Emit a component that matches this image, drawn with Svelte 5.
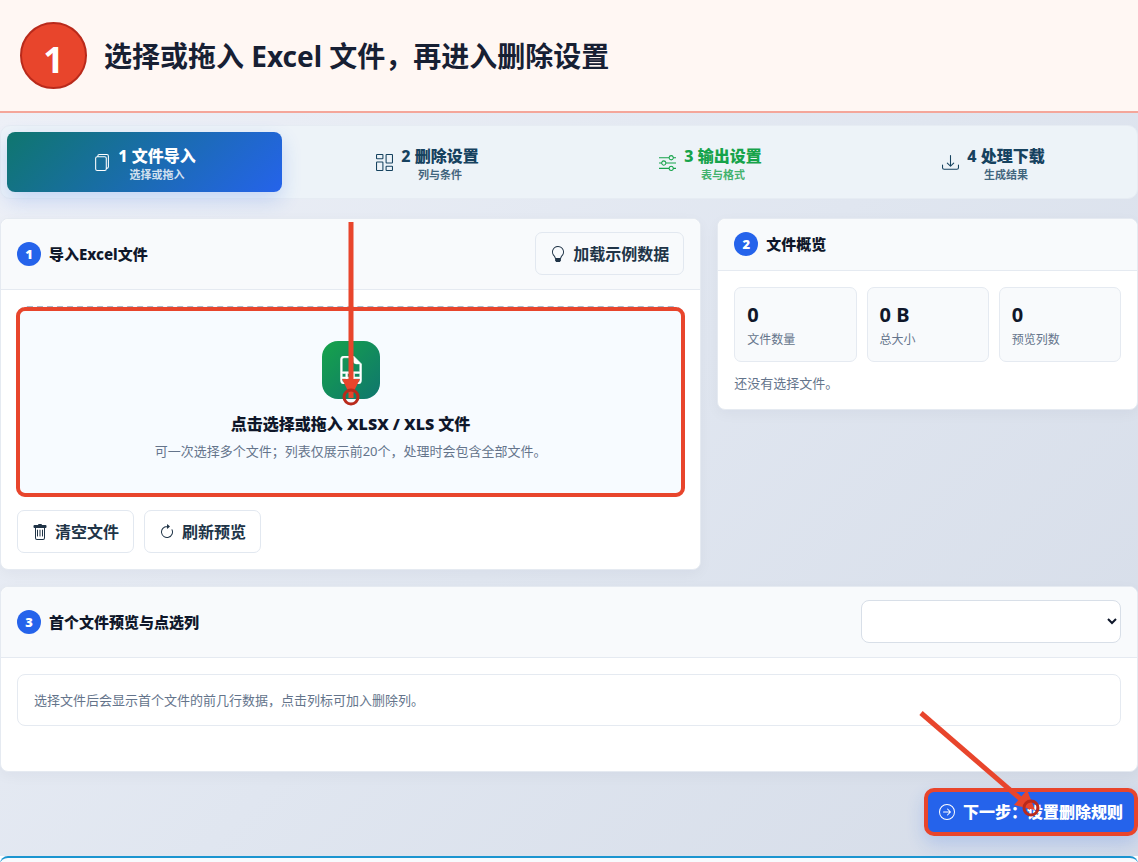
<script lang="ts">
	const icons = {
		files: 'M13 0H6a2 2 0 0 0-2 2 2 2 0 0 0-2 2v10a2 2 0 0 0 2 2h7a2 2 0 0 0 2-2 2 2 0 0 0 2-2V2a2 2 0 0 0-2-2m0 13V4a2 2 0 0 0-2-2H5a1 1 0 0 1 1-1h7a1 1 0 0 1 1 1v10a1 1 0 0 1-1 1M3 4a1 1 0 0 1 1-1h7a1 1 0 0 1 1 1v10a1 1 0 0 1-1 1H4a1 1 0 0 1-1-1z',
		columns:
			'M6 1v3H1V1zM1 0a1 1 0 0 0-1 1v3a1 1 0 0 0 1 1h5a1 1 0 0 0 1-1V1a1 1 0 0 0-1-1zm14 12v3h-5v-3zm-5-1a1 1 0 0 0-1 1v3a1 1 0 0 0 1 1h5a1 1 0 0 0 1-1v-3a1 1 0 0 0-1-1zM6 8v7H1V8zM1 7a1 1 0 0 0-1 1v7a1 1 0 0 0 1 1h5a1 1 0 0 0 1-1V8a1 1 0 0 0-1-1zm14-6v7h-5V1zm-5-1a1 1 0 0 0-1 1v7a1 1 0 0 0 1 1h5a1 1 0 0 0 1-1V1a1 1 0 0 0-1-1z',
		sliders:
			'M11.5 2a1.5 1.5 0 1 0 0 3 1.5 1.5 0 0 0 0-3M9.05 3a2.5 2.5 0 0 1 4.9 0H16v1h-2.05a2.5 2.5 0 0 1-4.9 0H0V3zM4.5 7a1.5 1.5 0 1 0 0 3 1.5 1.5 0 0 0 0-3M2.05 8a2.5 2.5 0 0 1 4.9 0H16v1H6.95a2.5 2.5 0 0 1-4.9 0H0V8zm9.45 4a1.5 1.5 0 1 0 0 3 1.5 1.5 0 0 0 0-3m-2.45 1a2.5 2.5 0 0 1 4.9 0H16v1h-2.05a2.5 2.5 0 0 1-4.9 0H0v-1z',
		download:
			'M.5 9.9a.5.5 0 0 1 .5.5v2.5a1 1 0 0 0 1 1h12a1 1 0 0 0 1-1v-2.5a.5.5 0 0 1 1 0v2.5a2 2 0 0 1-2 2H2a2 2 0 0 1-2-2v-2.5a.5.5 0 0 1 .5-.5M7.646 11.854a.5.5 0 0 0 .708 0l3-3a.5.5 0 0 0-.708-.708L8.5 10.293V1.5a.5.5 0 0 0-1 0v8.793L5.354 8.146a.5.5 0 1 0-.708.708z',
		bulb: 'M2 6a6 6 0 1 1 10.174 4.31c-.203.196-.359.4-.453.619l-.762 1.769A.5.5 0 0 1 10.5 13a.5.5 0 0 1 0 1 .5.5 0 0 1 0 1l-.224.447a1 1 0 0 1-.894.553H6.618a1 1 0 0 1-.894-.553L5.5 15a.5.5 0 0 1 0-1 .5.5 0 0 1 0-1 .5.5 0 0 1-.46-.302l-.761-1.77a2 2 0 0 0-.453-.618A5.98 5.98 0 0 1 2 6m6-5a5 5 0 0 0-3.479 8.592c.263.254.514.564.676.941L5.83 12h4.342l.632-1.467c.162-.377.413-.687.676-.941A5 5 0 0 0 8 1',
		trash: 'M5.5 5.5A.5.5 0 0 1 6 6v6a.5.5 0 0 1-1 0V6a.5.5 0 0 1 .5-.5m2.5 0a.5.5 0 0 1 .5.5v6a.5.5 0 0 1-1 0V6a.5.5 0 0 1 .5-.5m3 .5a.5.5 0 0 0-1 0v6a.5.5 0 0 0 1 0zM14.5 3a1 1 0 0 1-1 1H13v10a2 2 0 0 1-2 2H5a2 2 0 0 1-2-2V4h-.5a1 1 0 0 1-1-1V2a1 1 0 0 1 1-1H6a1 1 0 0 1 1-1h2a1 1 0 0 1 1 1h3.5a1 1 0 0 1 1 1zM4 4.059V14a1 1 0 0 0 1 1h6a1 1 0 0 0 1-1V4.059z',
		refresh:
			'M8 3a5 5 0 1 0 4.546 2.914.5.5 0 0 1 .908-.417A6 6 0 1 1 8 2zM8 4.466V.534a.25.25 0 0 1 .41-.192l2.36 1.966c.12.1.12.284 0 .384L8.41 4.658A.25.25 0 0 1 8 4.466',
		next: 'M1 8a7 7 0 1 0 14 0A7 7 0 0 0 1 8m15 0A8 8 0 1 1 0 8a8 8 0 0 1 16 0M4.5 7.5a.5.5 0 0 0 0 1h5.793l-2.147 2.146a.5.5 0 0 0 .708.708l3-3a.5.5 0 0 0 0-.708l-3-3a.5.5 0 1 0-.708.708L10.293 7.5z',
		sheet: 'M14 14V4.5L9.5 0H4a2 2 0 0 0-2 2v12a2 2 0 0 0 2 2h8a2 2 0 0 0 2-2M9.5 3A1.5 1.5 0 0 0 11 4.5h2V9H3V2a1 1 0 0 1 1-1h5.5zM3 12v-2h2v2zm0 1h2v2H4a1 1 0 0 1-1-1zm3 2v-2h3v2zm4 0v-2h3v1a1 1 0 0 1-1 1zm3-3h-3v-2h3zm-7 0v-2h3v2z',
	}

	type IconName = keyof typeof icons

	const steps: { title: string; hint: string; icon: IconName; state: string }[] = [
		{ title: '1 文件导入', hint: '选择或拖入', icon: 'files', state: 'active' },
		{ title: '2 删除设置', hint: '列与条件', icon: 'columns', state: '' },
		{ title: '3 输出设置', hint: '表与格式', icon: 'sliders', state: 'ready' },
		{ title: '4 处理下载', hint: '生成结果', icon: 'download', state: '' },
	]

	const stats = [
		{ value: '0', label: '文件数量' },
		{ value: '0 B', label: '总大小' },
		{ value: '0', label: '预览列数' },
	]
</script>

{#snippet icon(name: IconName)}
	<svg class="icon" viewBox="0 0 16 16" fill="currentColor" aria-hidden="true">
		<path d={icons[name]} />
	</svg>
{/snippet}

<header class="banner">
	<span class="banner-number">1</span>
	<h1>选择或拖入 Excel 文件，再进入删除设置</h1>
</header>

<main>
	<nav class="steps">
		{#each steps as step}
			<button type="button" class="step {step.state}">
				{@render icon(step.icon)}
				<span class="step-text">
					<strong>{step.title}</strong>
					<small>{step.hint}</small>
				</span>
			</button>
		{/each}
	</nav>

	<div class="columns">
		<section class="panel">
			<div class="panel-head">
				<span class="badge">1</span>
				<h2>导入Excel文件</h2>
				<button type="button" class="btn">{@render icon('bulb')}加载示例数据</button>
			</div>
			<div class="panel-body">
				<button type="button" class="dropzone">
					<span class="drop-icon">{@render icon('sheet')}</span>
					<strong>点击选择或拖入 XLSX / XLS 文件</strong>
					<span class="drop-hint">可一次选择多个文件；列表仅展示前20个，处理时会包含全部文件。</span>
					<span class="highlight"></span>
					<svg class="arrow arrow-down" viewBox="0 0 20 184" aria-hidden="true">
						<path d="M10 0v176" stroke="#e8452c" stroke-width="5" />
						<path d="M1 157h18l-9 18z" fill="#e8452c" />
						<circle cx="10" cy="175" r="7" fill="none" stroke="#b92a1b" stroke-width="3" />
					</svg>
				</button>
				<div class="actions">
					<button type="button" class="btn">{@render icon('trash')}清空文件</button>
					<button type="button" class="btn">{@render icon('refresh')}刷新预览</button>
				</div>
			</div>
		</section>

		<section class="panel">
			<div class="panel-head">
				<span class="badge">2</span>
				<h2>文件概览</h2>
			</div>
			<div class="panel-body">
				<div class="stats">
					{#each stats as stat}
						<div class="stat">
							<strong>{stat.value}</strong>
							<span>{stat.label}</span>
						</div>
					{/each}
				</div>
				<p class="empty">还没有选择文件。</p>
			</div>
		</section>
	</div>

	<section class="panel">
		<div class="panel-head">
			<span class="badge">3</span>
			<h2 id="preview-title">首个文件预览与点选列</h2>
			<select aria-labelledby="preview-title"></select>
		</div>
		<div class="panel-body preview">
			<p class="message">选择文件后会显示首个文件的前几行数据，点击列标可加入删除列。</p>
		</div>
	</section>

	<div class="footer">
		<button type="button" class="next">
			{@render icon('next')}下一步：设置删除规则
			<svg class="arrow arrow-next" viewBox="0 0 122 108" aria-hidden="true">
				<path d="M2 3l110 95" stroke="#e8452c" stroke-width="5" />
				<path d="M95 95l13-15 8 20z" fill="#e8452c" />
				<circle cx="112" cy="98" r="7" fill="none" stroke="#b92a1b" stroke-width="3" />
			</svg>
		</button>
	</div>
</main>

<div class="next-card"></div>

<style>
	:global(body) {
		margin: 0;
		background: #fff;
		color: #0f172a;
		font-family: 'Noto Sans', 'Noto Sans CJK SC', sans-serif;
		font-size: 13px;
		line-height: 20px;
	}

	h1,
	h2,
	p {
		margin: 0;
	}

	button,
	select {
		box-sizing: border-box;
		font: inherit;
		color: inherit;
	}

	button {
		cursor: pointer;
	}

	.icon {
		width: 16px;
		height: 16px;
		flex: none;
	}

	.banner {
		display: flex;
		align-items: center;
		gap: 17px;
		height: 111px;
		padding: 0 20px;
		background: #fff7f3;
		border-bottom: 2px solid #f4a69a;
	}

	.banner-number {
		box-sizing: border-box;
		width: 67px;
		height: 67px;
		padding-top: 6px;
		border: 2px solid #b92a1b;
		border-radius: 50%;
		background: #e8452c;
		color: #fff;
		font-size: 36px;
		font-weight: 700;
		line-height: 60px;
		text-align: center;
	}

	h1 {
		color: #172033;
		font-size: 28px;
		font-weight: 700;
		line-height: 40px;
	}

	main {
		display: flex;
		flex-direction: column;
		gap: 16px;
		padding: 12px 0 20px;
		background: linear-gradient(135deg, #edf0f7 0%, #e0e6f0 50%, #d5dce8 100%);
	}

	.steps {
		display: grid;
		grid-template-columns: repeat(4, 1fr);
		gap: 8px;
		margin-bottom: 3px;
		padding: 6px;
		border: 1px solid #e6ecf3;
		border-radius: 10px;
		background: #edf3f8;
	}

	.step {
		display: flex;
		align-items: center;
		justify-content: center;
		gap: 8px;
		height: 60px;
		padding: 0;
		border: 0;
		border-radius: 8px;
		background: none;
		color: #16425f;
	}

	.step .icon {
		width: 17px;
		height: 17px;
	}

	.step-text {
		display: flex;
		flex-direction: column;
		align-items: center;
		padding-top: 3px;
	}

	.step strong {
		font-size: 16px;
		font-weight: 800;
		line-height: 22px;
	}

	.step small {
		font-size: 11px;
		font-weight: 600;
		line-height: 16px;
		opacity: 0.8;
	}

	.step.active {
		background: linear-gradient(135deg, #0f766e, #2563eb);
		box-shadow: 0 8px 20px rgba(37, 99, 235, 0.2);
		color: #fff;
	}

	.step.ready {
		color: #16a34a;
	}

	.columns {
		display: grid;
		grid-template-columns: 5fr 3fr;
		align-items: start;
		gap: 16px;
	}

	.panel {
		border: 1px solid #e5eaf1;
		border-radius: 8px;
		background: #fff;
		box-shadow: 0 4px 14px rgba(15, 23, 42, 0.04);
	}

	.panel-head {
		display: flex;
		align-items: center;
		gap: 8px;
		padding: 13px 16px 14px;
		border-bottom: 1px solid #e5eaf1;
		border-radius: 8px 8px 0 0;
		background: #f8fafc;
	}

	.panel-head .btn,
	.panel-head select {
		margin-left: auto;
	}

	.panel-body {
		padding: 16px;
	}

	.badge {
		width: 24px;
		height: 24px;
		border-radius: 50%;
		background: #2563eb;
		color: #fff;
		font-size: 13px;
		font-weight: 900;
		line-height: 24px;
		text-align: center;
	}

	h2 {
		font-size: 15px;
		font-weight: 800;
		line-height: 24px;
	}

	.btn {
		display: flex;
		align-items: center;
		gap: 7px;
		height: 43px;
		padding: 0 14px;
		border: 1px solid #e2e8f0;
		border-radius: 7px;
		background: #fff;
		color: #203447;
		font-size: 16px;
		font-weight: 700;
	}

	.panel-head .btn {
		background: #f8fafc;
	}

	.dropzone {
		position: relative;
		display: flex;
		flex-direction: column;
		align-items: center;
		width: 100%;
		height: 191px;
		padding: 33px 16px 0;
		border: 2px dashed #a9b8c8;
		border-radius: 10px;
		background: #f7fbff;
	}

	.dropzone strong {
		margin-top: 12px;
		font-size: 16px;
		font-weight: 900;
		line-height: 26px;
	}

	.drop-icon {
		display: grid;
		place-items: center;
		width: 58px;
		height: 58px;
		border-radius: 16px;
		background: linear-gradient(135deg, #16a34a, #0f766e);
		color: #fff;
	}

	.drop-icon .icon {
		width: 28px;
		height: 28px;
		stroke: currentColor;
		stroke-width: 0.3;
	}

	.drop-hint {
		margin-top: 4px;
		color: #64748b;
	}

	.highlight {
		position: absolute;
		inset: -1px -3px -2px;
		border: 4px solid #e8452c;
		border-radius: 9px;
	}

	.arrow {
		position: absolute;
		fill: none;
		pointer-events: none;
	}

	.arrow-down {
		top: -86px;
		left: calc(50% - 10px);
		width: 20px;
		height: 184px;
	}

	.actions {
		display: flex;
		gap: 10px;
		margin-top: 13px;
	}

	.stats {
		display: grid;
		grid-template-columns: repeat(3, 1fr);
		gap: 10px;
	}

	.stat {
		display: flex;
		flex-direction: column;
		padding: 13px 12px 10px;
		border: 1px solid #e5eaf1;
		border-radius: 7px;
		background: #f8fafc;
	}

	.stat strong {
		font-size: 20px;
		font-weight: 700;
		line-height: 28px;
	}

	.stat span {
		color: #64748b;
		font-size: 12px;
		line-height: 22px;
	}

	.empty {
		margin-top: 11px;
		color: #64748b;
	}

	select {
		width: 260px;
		height: 43px;
		padding: 0;
		border: 1px solid #d8dfe8;
		border-radius: 8px;
		background: #fff;
	}

	.preview {
		padding-bottom: 45px;
	}

	.message {
		padding: 15px 16px;
		border: 1px solid #e5eaf1;
		border-radius: 8px;
		color: #64748b;
	}

	.footer {
		display: flex;
		justify-content: flex-end;
	}

	.next {
		position: relative;
		display: flex;
		align-items: center;
		gap: 8px;
		height: 48px;
		padding: 0 11px;
		border: 4px solid #e8452c;
		border-radius: 10px;
		background: #2563eb;
		box-shadow: 0 8px 18px rgba(37, 99, 235, 0.2);
		color: #fff;
		font-size: 16px;
		font-weight: 800;
	}

	.arrow-next {
		top: -82px;
		right: 93px;
		width: 122px;
		height: 108px;
	}

	.next-card {
		height: 16px;
		border-top: 2px solid #1b95d0;
		border-radius: 8px 8px 0 0;
		background: #f8fbfe;
	}

	:global(html) {
		overflow: hidden auto;
		scrollbar-width: none;
	}
</style>
